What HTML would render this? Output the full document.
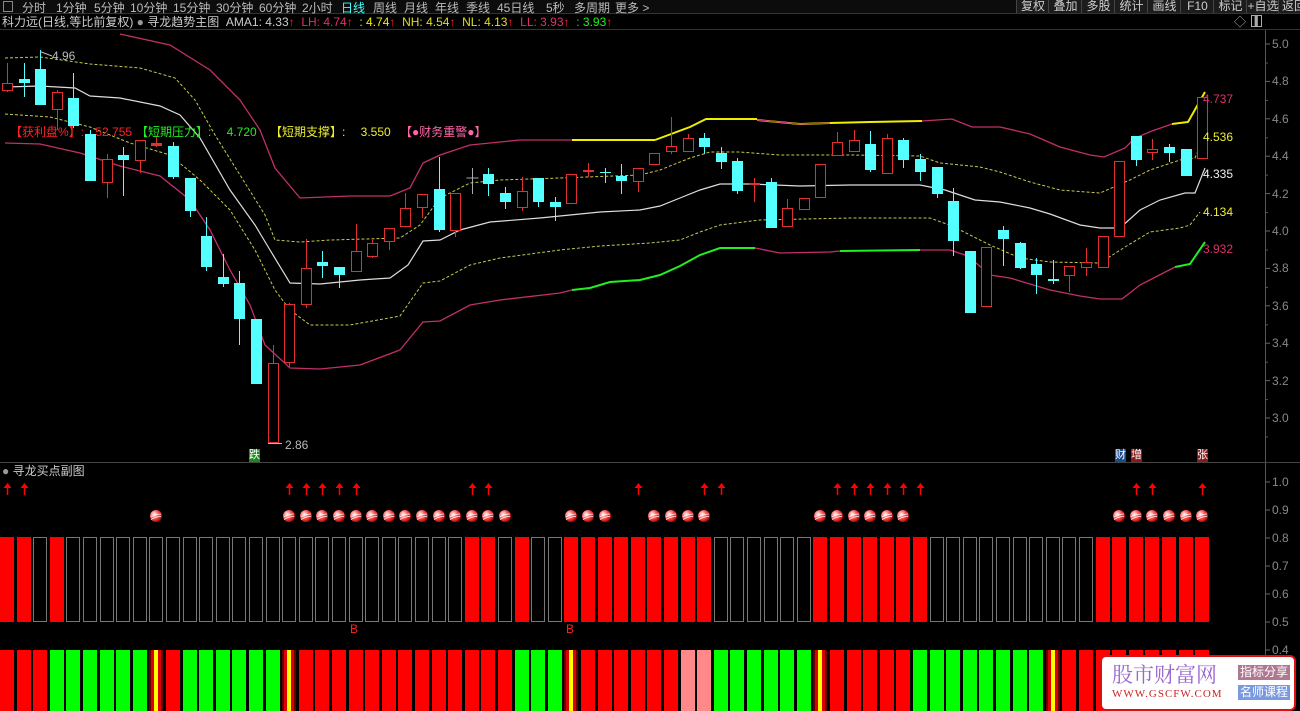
<!DOCTYPE html>
<html><head><meta charset="utf-8"><style>
body{margin:0;background:#000;width:1300px;height:711px;overflow:hidden;font-family:"Liberation Sans","Noto Sans CJK SC",sans-serif;position:relative}
.t{position:absolute;white-space:nowrap;font-size:12px;line-height:13px}
#menu{position:absolute;left:0;top:0;width:1300px;height:13px;background:#0c0c0c;border-bottom:1px solid #333}
#menu span{position:absolute;top:-1px;font-size:12px;color:#bbb}
.btn{position:absolute;top:0;height:13px;background:#1c1c1c;border-left:1px solid #444;color:#ccc;font-size:12px;line-height:12px;text-align:center}
</style></head><body>
<div id="menu">
<div style="position:absolute;left:3px;top:1px;width:8px;height:9px;border:1px solid #888"></div>
<span style="left:22px">分时</span><span style="left:56px">1分钟</span><span style="left:94px">5分钟</span><span style="left:130px">10分钟</span><span style="left:173px">15分钟</span><span style="left:216px">30分钟</span><span style="left:259px">60分钟</span><span style="left:302px">2小时</span><span style="left:341px;color:#4ff">日线</span><span style="left:373px">周线</span><span style="left:404px">月线</span><span style="left:435px">年线</span><span style="left:466px">季线</span><span style="left:497px">45日线</span><span style="left:546px">5秒</span><span style="left:574px">多周期</span><span style="left:615px">更多 &gt;</span>
<div class="btn" style="left:1016px;width:32px">复权</div><div class="btn" style="left:1048px;width:33px">叠加</div><div class="btn" style="left:1081px;width:33px">多股</div><div class="btn" style="left:1114px;width:33px">统计</div><div class="btn" style="left:1147px;width:33px">画线</div><div class="btn" style="left:1180px;width:33px">F10</div><div class="btn" style="left:1213px;width:33px">标记</div><div class="btn" style="left:1246px;width:32px">+自选</div><div class="btn" style="left:1278px;width:30px">返回</div>
</div>
<div class="t" style="left:2px;top:16px;color:#ccc">科力远(日线,等比前复权) <span style="color:#999">●</span> 寻龙趋势主图 &nbsp;AMA1: 4.33<span style="color:#f22">↑</span> <span style="color:#e0306a">&nbsp;LH: 4.74<span style="color:#f22">↑</span></span> <span style="color:#ee0">&nbsp;: 4.74<span style="color:#f22">↑</span></span> <span style="color:#dd2">&nbsp;NH: 4.54<span style="color:#f22">↑</span></span> <span style="color:#dd2">&nbsp;NL: 4.13<span style="color:#f22">↑</span></span> <span style="color:#e0306a">&nbsp;LL: 3.93<span style="color:#f22">↑</span></span> <span style="color:#2e2">&nbsp;: 3.93<span style="color:#f22">↑</span></span></div>
<div class="t" style="left:1234px;top:16px;color:#aaa">◇</div><div class="t" style="left:1251px;top:15px;color:#aaa;border:1px solid #aaa;width:9px;height:10px;font-size:9px;line-height:10px;text-align:right">▌</div>

<svg id="s" width="1300" height="711" style="position:absolute;left:0;top:0"></svg>

<div class="t" style="left:10px;top:126px;color:#f22">【获利盘%】: <span style="margin-left:8px">52.755</span></div>
<div class="t" style="left:136px;top:126px;color:#2e2">【短期压力】: <span style="margin-left:12px">4.720</span></div>
<div class="t" style="left:270px;top:126px;color:#ee3">【短期支撑】: <span style="margin-left:12px">3.550</span></div>
<div class="t" style="left:400px;top:126px;color:#f6a">【●财务重警●】</div>
<div class="t" style="left:52px;top:50px;color:#bbb">4.96</div>
<div class="t" style="left:285px;top:439px;color:#bbb">2.86</div>
<div class="t" style="left:1203px;top:93px;color:#e0306a">4.737</div>
<div class="t" style="left:1203px;top:131px;color:#ee3">4.536</div>
<div class="t" style="left:1203px;top:168px;color:#eee">4.335</div>
<div class="t" style="left:1203px;top:206px;color:#ee3">4.134</div>
<div class="t" style="left:1203px;top:243px;color:#e0306a">3.932</div>
<div class="t" style="left:249px;top:449px;color:#fff;background:#1a8a1a;font-size:11px">跌</div>
<div class="t" style="left:1115px;top:449px;color:#fff;background:#1a4a8a;font-size:11px">财</div>
<div class="t" style="left:1131px;top:449px;color:#fff;background:#8a1a1a;font-size:11px">增</div>
<div class="t" style="left:1197px;top:449px;color:#fff;background:#8a1a1a;font-size:11px">张</div>
<div class="t" style="left:2px;top:465px;color:#ccc"><span style="color:#999">●</span> 寻龙买点副图</div>
<div class="t" style="left:350px;top:623px;color:#f22;font-size:12px">B</div>
<div class="t" style="left:566px;top:623px;color:#f22;font-size:12px">B</div>
<div id="ax"></div>
<div style="position:absolute;left:1100px;top:655px;width:192px;height:52px;background:#fff;border:2px solid #d11;border-radius:6px">
<div class="t" style="left:10px;top:5px;font-size:21px;line-height:24px;color:#96c;font-family:'Noto Serif CJK SC',serif">股市财富网</div>
<div class="t" style="left:10px;top:31px;font-size:11px;color:#c22;font-family:'Liberation Serif',serif;letter-spacing:1px">WWW.GSCFW.COM</div>
<div class="t" style="left:136px;top:8px;background:#b07890;color:#fff;font-size:12px;padding:1px 2px">指标分享</div>
<div class="t" style="left:136px;top:28px;background:#7a9ae0;color:#fff;font-size:12px;padding:1px 2px">名师课程</div>
</div>
<script>
var s=document.getElementById('s'),h='';
function L(x1,y1,x2,y2,c,w,d){h+='<line x1="'+x1+'" y1="'+y1+'" x2="'+x2+'" y2="'+y2+'" stroke="'+c+'" stroke-width="'+(w||1)+'"'+(d?' stroke-dasharray="'+d+'"':'')+'/>';}
function R(x,y,w,ht,f,st){h+='<rect x="'+x+'" y="'+y+'" width="'+w+'" height="'+ht+'" fill="'+f+'"'+(st?' stroke="'+st+'"':'')+'/>';}
function P(pts,c,w,d){h+='<polyline fill="none" points="'+pts.map(function(p){return p.join(',')}).join(' ')+'" stroke="'+c+'" stroke-width="'+(w||1)+'"'+(d?' stroke-dasharray="'+d+'"':'')+'/>';}
L(1265.5,30,1265.5,711,'#555');L(0,462.5,1300,462.5,'#444');L(0,29.5,1300,29.5,'#333');
var ax=document.getElementById('ax'),at='';
[5.0,4.8,4.6,4.4,4.2,4.0,3.8,3.6,3.4,3.2,3.0].forEach(function(v){var y=44+(5-v)*187;L(1265,y,1270,y,'#666');L(1265,y+19,1268,y+19,'#555');at+='<div class="t" style="left:1272px;top:'+(y-6)+'px;color:#888">'+v.toFixed(1)+'</div>';});
[1.0,0.9,0.8,0.7,0.6,0.5,0.4].forEach(function(v,i){var y=482+i*28;L(1265,y,1270,y,'#666');at+='<div class="t" style="left:1272px;top:'+(y-6)+'px;color:#888">'+v.toFixed(1)+'</div>';});
ax.innerHTML=at;
P([[120,34],[170,45],[210,70],[240,100],[260,130],[275,168],[300,198],[350,196],[390,196],[410,188],[423,163],[440,155],[470,145],[520,140],[572,140]],'#c0306a',1.3);
P([[572,140],[655,140]],'#ee0',2);
P([[655,140],[690,127],[706,119],[757,119]],'#ee0',2);
P([[757,120],[800,124],[830,123],[870,122],[922,121]],'#ee0',2);
P([[757,120],[800,124],[830,123]],'#c0306a',1.3);
P([[922,121],[952,119],[972,127],[1000,127],[1030,134],[1060,147],[1090,155],[1104,157],[1125,148],[1135,138],[1152,131],[1172,124]],'#c0306a',1.3);
P([[1172,124],[1188,122],[1205,92]],'#ee0',2);
P([[5,58],[40,57],[90,64],[140,68],[175,78],[195,100],[215,135],[240,175],[265,215],[275,240],[300,242],[330,240],[400,238],[420,225],[440,198],[470,183],[500,180],[560,178],[640,175],[660,170],[690,158],[710,152],[740,152],[780,155],[850,155],[920,156],[940,163],[980,167],[1000,172],[1030,182],[1060,190],[1100,193],[1130,180],[1150,170],[1180,160],[1195,158],[1205,135]],'#c8c850',1,'3,2');
P([[5,87],[40,86],[75,88],[90,96],[120,98],[160,106],[180,115],[200,138],[230,190],[255,225],[270,250],[290,283],[320,284],[360,280],[390,278],[408,265],[423,241],[440,240],[460,230],[490,222],[540,218],[600,212],[640,210],[660,206],[680,198],[700,190],[720,184],[750,184],[800,186],[850,185],[920,185],[945,190],[975,200],[1000,202],[1030,208],[1050,214],[1080,225],[1100,228],[1120,228],[1140,210],[1160,200],[1185,193],[1195,193],[1205,168]],'#ddd',1.2);
P([[5,114],[50,117],[90,127],[130,143],[170,155],[200,180],[230,210],[255,250],[275,290],[290,310],[310,325],[350,325],[400,316],[423,283],[440,281],[470,265],[500,258],[560,250],[600,246],[650,243],[680,240],[700,232],[720,225],[760,220],[850,218],[930,218],[952,226],[970,235],[990,245],[1020,258],[1050,262],[1100,263],[1125,247],[1150,232],[1180,228],[1190,225],[1200,212]],'#c8c850',1,'3,2');
P([[5,143],[40,144],[80,153],[120,166],[160,176],[190,200],[210,230],[230,270],[250,305],[265,345],[290,368],[320,369],[360,365],[400,350],[423,322],[440,321],[470,305],[500,300],[560,293],[572,290]],'#c0306a',1.3);
P([[572,290],[590,288],[610,282],[640,280],[660,275],[680,266],[700,255],[720,248],[755,248]],'#2e2',2);
P([[755,248],[780,253],[830,252],[840,251]],'#c0306a',1.3);
P([[840,251],[920,250]],'#2e2',2);
P([[920,250],[950,250],[965,255],[975,262],[990,275],[1010,278],[1050,290],[1080,296],[1100,299],[1122,299],[1140,285],[1175,267]],'#c0306a',1.3);
P([[1175,267],[1190,264],[1205,242]],'#2e2',2);
var C=[['r',83,91,63,92],['c',79,83,63,97],['c',69,105,50,69],['r',92,110,90,130],['c',98,126,73,128],['c',134,181,130,181],['r',159,183,154,198],['c',155,160,147,196],['r',140,161,140,173],['r',143,146,136,147],['c',146,177,142,179],['c',178,211,178,217],['c',236,267,217,271],['c',277,284,254,287],['c',283,319,271,345],['c',319,384,319,384],['r',363,443,345,443],['r',304,363,303,367],['r',268,305,239,308],['c',262,266,251,278],['c',267,275,267,288],['r',251,272,224,272],['r',243,257,240,258],['r',228,242,228,250],['r',208,227,193,227],
['r',194,208,194,218],['c',189,230,157,232],['r',193,231,193,237],['g',178,178,168,194],['c',174,184,168,196],['c',193,202,187,209],['r',191,208,177,211],['c',178,202,178,207],['c',202,207,197,221],['r',174,204,174,204],['r',170,172,163,177],['c',172,173,168,183],['c',176,181,164,194],['r',168,182,168,192],['r',153,165,153,165],['r',146,152,117,154],['r',138,152,134,152],['c',138,147,133,154],['c',153,162,147,169],['c',161,191,158,194],['r',183,185,178,202],['c',182,228,178,228],['r',208,227,199,227],['r',198,210,198,210],['r',164,198,164,198],
['r',142,156,132,156],['r',140,152,130,152],['c',144,170,131,172],['r',138,174,134,174],['c',140,160,138,168],['c',159,172,154,181],['c',167,194,167,198],['c',201,241,188,256],['c',251,313,251,313],['r',247,307,247,307],['c',230,239,226,266],['c',243,268,242,269],['c',264,275,258,294],['c',279,281,260,284],['r',266,276,266,292],['r',262,268,248,276],['r',236,268,236,268],['r',161,237,161,237],['c',136,160,136,166],['r',149,153,139,160],['c',147,153,144,162],['c',149,176,149,176],['r',97,159,97,159]];
C.forEach(function(c,i){var x=Math.round(i*16.6+7)+0.5,col=c[0]=='c'?'#54ffff':c[0]=='r'?'#e03030':'#aaa';
 L(x,c[3],x,c[4],col);
 var ht=Math.max(c[2]-c[1],1);
 if(c[0]=='c')R(x-5.5,c[1],11,ht,col);else if(c[0]=='g')L(x-6,c[1],x+6,c[1],col);else if(ht<4)R(x-5.5,c[1],11,ht,col);else R(x-5,c[1]+0.5,10,ht-1,'#000',col);});
L(268,443.5,282,443.5,'#bbb');L(40,51.5,52,56,'#bbb');
var T=[];for(var i=0;i<73;i++)T[i]='O';
[0,1,3,28,29,31].concat([34,35,36,37,38,39,40,41,42,49,50,51,52,53,54,55,66,67,68,69,70,71,72]).forEach(function(i){T[i]='R'});
var B=[];for(i=0;i<73;i++)B[i]='R';
[3,4,5,6,7,8,11,12,13,14,15,16,31,32,33,43,44,45,46,47,48,55,56,57,58,59,60,61,62].forEach(function(i){B[i]='G'});
[9,17,34,49,63].forEach(function(i){B[i]='Y'});[41,42].forEach(function(i){B[i]='P'});
var arr=[0,1,17,18,19,20,21,28,29,38,42,43,50,51,52,53,54,55,68,69,72];
var balls=[9];for(i=17;i<=30;i++)balls.push(i);balls=balls.concat([34,35,36,39,40,41,42,49,50,51,52,53,54,67,68,69,70,71,72]);
h+='<defs><radialGradient id="bg" cx="35%" cy="35%" r="70%"><stop offset="0" stop-color="#fff"/><stop offset="0.5" stop-color="#f55"/><stop offset="1" stop-color="#a00"/></radialGradient></defs>';
for(i=0;i<73;i++){var x=Math.round(i*16.6);
 if(T[i]=='R')R(x,537,14,85,'#f00');else R(x+0.5,537.5,13,84,'none','#777');
 var b=B[i];
 if(b=='G')R(x,650,14,61,'#0f0');else if(b=='P')R(x,650,14,61,'#f88');else if(b=='Y'){R(x,650,14,61,'#600');R(x+2,650,10,61,'#d00');R(x+5,650,4,61,'#ff0');}else R(x,650,14,61,'#f00');
}
arr.forEach(function(i){var x=Math.round(i*16.6+7)+0.5;L(x,487,x,495,'#f00',1.5);h+='<polygon points="'+(x-4)+',488 '+x+',483 '+(x+4)+',488" fill="#f00"/>';});
balls.forEach(function(i){var x=Math.round(i*16.6+7);h+='<circle cx="'+x+'" cy="516" r="6" fill="url(#bg)"/><path d="M'+(x-5)+' 517 q5 -3 10 -3 M'+(x-5)+' 519.5 q5 -3 10 -3" stroke="#fff" stroke-width="0.8" fill="none"/>';});
s.innerHTML=h;
</script>
</body></html>
